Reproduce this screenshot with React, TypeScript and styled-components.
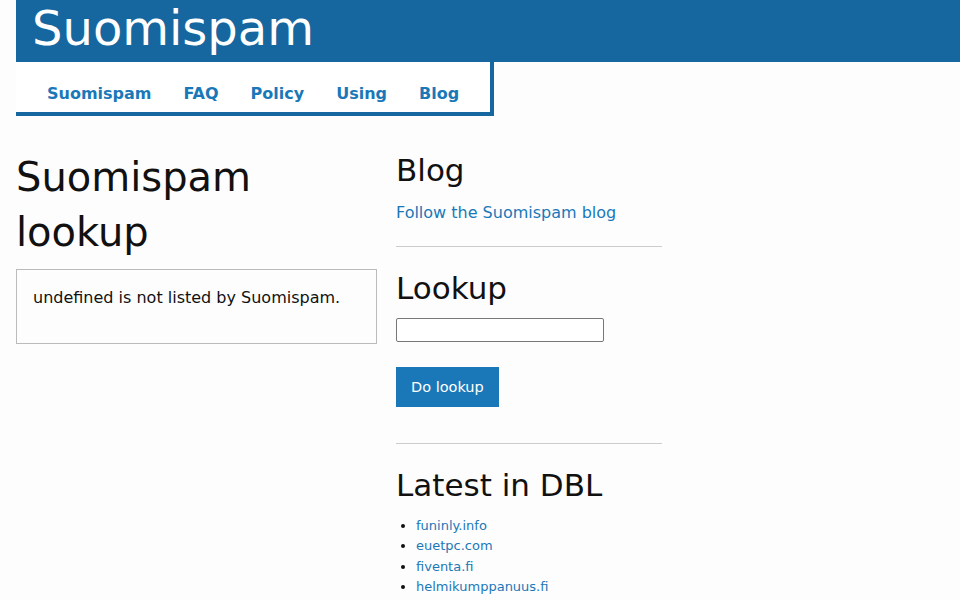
import styled, { createGlobalStyle } from 'styled-components'

const GlobalStyle = createGlobalStyle`
    body {
        margin: 0;
        padding: 0 0 0 16px;
        background: #fdfdfd;
        font-family: 'DejaVu Sans', sans-serif;
        color: #111;
    }
`

const Header = styled.header`
    background: #16679f;
    height: 62px;
    padding: 0 16px;
    display: flex;
    align-items: center;
`

const Title = styled.h1`
    margin: 0;
    color: #fff;
    font-weight: normal;
    font-size: 48px;
    line-height: 1;
    transform: translateY(-3px);
`

const Nav = styled.nav`
    display: inline-flex;
    padding: 22px 15px 9px;
    border-right: 4px solid #16679f;
    border-bottom: 4px solid #16679f;
    background: #fff;
`

const NavLink = styled.a`
    padding: 0 16px;
    color: #1a78b8;
    font-weight: bold;
    font-size: 16px;
    line-height: 19px;
    text-decoration: none;
`

const Layout = styled.div`
    display: grid;
    grid-template-columns: 361px 266px;
    gap: 19px;
    padding-top: 34px;
`

const PageTitle = styled.h1`
    margin: 0 0 9px;
    font-size: 40px;
    line-height: 55px;
    font-weight: normal;
`

const Notice = styled.div`
    border: 1px solid #bbb;
    padding: 18px 16px 35px;
    font-size: 16px;
    line-height: 20px;
`

const Section = styled.section<{ $bottom?: number; $last?: boolean }>`
    padding-bottom: ${(p) => p.$bottom ?? 21}px;
    border-bottom: ${(p) => (p.$last ? 'none' : '1px solid #ccc')};

    & + & {
        padding-top: 21px;
    }
`

const SectionTitle = styled.h2<{ $space?: number }>`
    margin: 0 0 ${(p) => p.$space ?? 10}px;
    font-size: 31px;
    line-height: 40px;
    font-weight: normal;
`

const Paragraph = styled.p`
    margin: 0;
    font-size: 16px;
    line-height: 26px;
`

const Link = styled.a`
    color: #1a78b8;
    text-decoration: none;
`

const Input = styled.input`
    display: block;
    box-sizing: border-box;
    width: 208px;
    height: 24px;
    border: 1px solid #777;
    border-radius: 2px;
    margin: 1px 0 25px;
`

const Button = styled.button`
    display: block;
    background: #1a78b8;
    color: #fff;
    border: none;
    font-family: 'DejaVu Sans', sans-serif;
    font-size: 14.5px;
    height: 40px;
    padding: 0 15px;
`

const List = styled.ul`
    margin: 0;
    padding-left: 20px;
    font-size: 13px;
    line-height: 20.33px;
`

const navItems = ['Suomispam', 'FAQ', 'Policy', 'Using', 'Blog']
const latest = ['funinly.info', 'euetpc.com', 'fiventa.fi', 'helmikumppanuus.fi']

export default function App() {
    return (
        <>
            <GlobalStyle />
            <Header>
                <Title>Suomispam</Title>
            </Header>
            <Nav>
                {navItems.map((item) => (
                    <NavLink href="#" key={item}>
                        {item}
                    </NavLink>
                ))}
            </Nav>
            <Layout>
                <main>
                    <PageTitle>Suomispam lookup</PageTitle>
                    <Notice>undefined is not listed by Suomispam.</Notice>
                </main>
                <aside>
                    <Section $bottom={20}>
                        <SectionTitle>Blog</SectionTitle>
                        <Paragraph>
                            <Link href="#">Follow the Suomispam blog</Link>
                        </Paragraph>
                    </Section>
                    <Section $bottom={36}>
                        <SectionTitle>Lookup</SectionTitle>
                        <Input type="text" />
                        <Button>Do lookup</Button>
                    </Section>
                    <Section $last>
                        <SectionTitle $space={11}>Latest in DBL</SectionTitle>
                        <List>
                            {latest.map((d) => (
                                <li key={d}>
                                    <Link href="#">{d}</Link>
                                </li>
                            ))}
                        </List>
                    </Section>
                </aside>
            </Layout>
        </>
    )
}
